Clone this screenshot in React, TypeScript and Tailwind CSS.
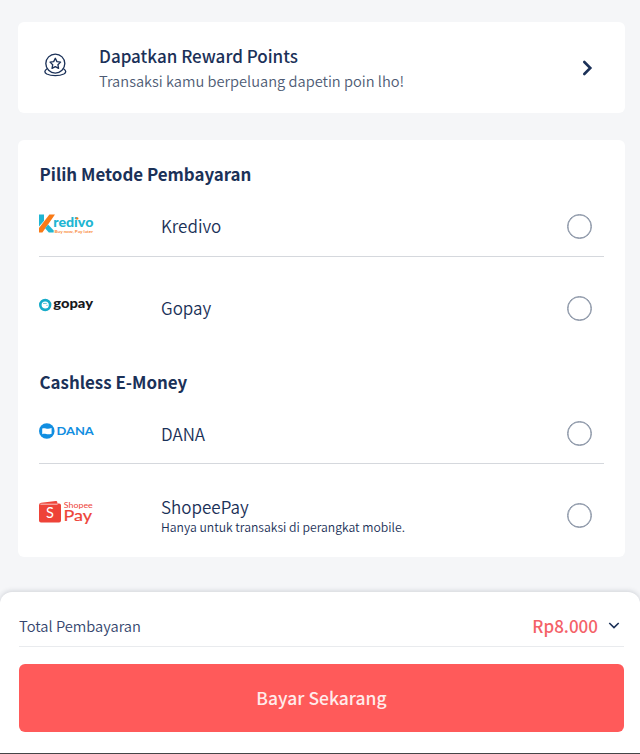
import React from 'react';

function RewardIcon() {
  return (
    <svg width="23" height="24" viewBox="0 0 24 25" fill="none" stroke="#1b3158" strokeWidth="1.4" strokeLinejoin="round" strokeLinecap="round">
      <circle cx="11.8" cy="11" r="9.9" />
      <path d="M3.2 16.4C.2 18.4.2 20.4 2.9 21.9c4.7 2.3 13.1 2.3 17.8 0 2.7-1.5 2.7-3.5-.3-5.5" />
      <path d="m11.8 5.5 1.7 3.5 3.8.5-2.8 2.7.7 3.8-3.4-1.8L8.4 16l.7-3.8-2.8-2.7 3.8-.5z" />
    </svg>
  );
}

function KredivoLogo() {
  return (
    <svg width="56" height="20" viewBox="0 0 56 20">
      <path d="M0 .6h5v6.2L0 12.5z" fill="#20b5d2" />
      <path d="M10.4 .6H16L3.4 18.6H0v-4.5z" fill="#f97a16" />
      <path d="m6.1 14.2 3-3.7 5.6 6.1v2H9.8z" fill="#20b5d2" />
      <text x="14.2" y="13" textLength="40.2" lengthAdjust="spacingAndGlyphs" fontFamily="Lato" fontWeight="900" fontSize="12.4" fill="#20b5d2">redivo</text>
      <circle cx="38.2" cy="4.4" r="1.2" fill="#f97a16" />
      <text x="15.5" y="18.6" textLength="38.5" lengthAdjust="spacingAndGlyphs" fontFamily="Lato" fontWeight="700" fontSize="4.3" fill="#f98a3a">Buy now, Pay later</text>
    </svg>
  );
}

function GopayLogo() {
  return (
    <svg width="56" height="18" viewBox="0 0 56 18">
      <circle cx="6.2" cy="9" r="4.9" fill="#fff" stroke="#16abc9" strokeWidth="2.6" />
      <path d="M4 7.4h3.8M7.4 9.4h1.2" stroke="#16abc9" strokeWidth=".7" />
      <text x="14.2" y="12.2" textLength="39.8" lengthAdjust="spacingAndGlyphs" fontFamily="Lato" fontWeight="900" fontSize="13.4" fill="#17191c">gopay</text>
    </svg>
  );
}

function DanaLogo() {
  return (
    <svg width="56" height="16" viewBox="0 0 56 16">
      <circle cx="7.8" cy="8" r="7.8" fill="#118ee1" />
      <path d="M3.2 5.6c2.9-1.2 4.4 1.1 9.4-.5v5.6c-4.5 1.7-6.4-.8-9.4.5z" fill="#fff" />
      <text x="17.4" y="11.8" textLength="37.4" lengthAdjust="spacingAndGlyphs" fontFamily="Lato" fontWeight="700" fontSize="10.4" fill="#118ee1">DANA</text>
    </svg>
  );
}

function ShopeePayLogo() {
  return (
    <svg width="56" height="26" viewBox="0 0 56 26">
      <path d="M0 5.2Q0 3 2.2 2.8L16.8 1q1.5-.1 1.5 1.3v1.2h1.8q1.9 0 1.9 1.8v15.2q0 1.9-1.9 1.9H2Q0 22.4 0 20.4z" fill="#ee4338" />
      <path d="M1.4 4.2h17.2" stroke="#fff" strokeWidth=".7" />
      <text x="7" y="18.2" fontFamily="Lato" fontSize="14.5" fill="#fff">S</text>
      <text x="24.8" y="7.8" textLength="29" lengthAdjust="spacingAndGlyphs" fontFamily="Lato" fontSize="8.4" fill="#ee4338">Shopee</text>
      <text x="24.4" y="20.8" textLength="28.6" lengthAdjust="spacingAndGlyphs" fontFamily="Lato" fontSize="16" fill="#ee4338" stroke="#ee4338" strokeWidth=".2">Pay</text>
    </svg>
  );
}

function Radio() {
  return <span className="h-[25px] w-[25px] shrink-0 rounded-full border-[1.5px] border-[#8590a2] shadow-[inset_0_0_0_0.5px_#8590a2]" />;
}

type MethodProps = { logo: React.ReactNode; name: string; note?: string; className: string; logoClass: string };

function Method({ logo, name, note, className, logoClass }: MethodProps) {
  return (
    <div className={`flex items-center pr-3 ${className}`}>
      <div className={`w-[122px] shrink-0 ${logoClass}`}>{logo}</div>
      <div className="flex-1">
        <div className="text-[17px] leading-[22px] font-[350]">{name}</div>
        {note && <div className="text-[12.2px] leading-[18px] font-[350] text-[#1b3158]">{note}</div>}
      </div>
      <Radio />
    </div>
  );
}

export default function App() {
  return (
    <div className="flex h-[754px] w-[640px] flex-col overflow-hidden bg-[#f5f6f8] pt-[22px] font-['Noto_Sans_CJK_SC',sans-serif] text-[#1b3158]">
      <section className="ml-[18px] flex h-[91px] w-[607px] shrink-0 items-center rounded-md bg-white">
        <div className="w-[81px] pl-[25.5px] pb-[6px]"><RewardIcon /></div>
        <div className="flex-1">
          <h2 className="text-[17px] leading-[26px] font-medium">Dapatkan Reward Points</h2>
          <p className="text-[14.65px] leading-[24px] font-[350] text-[#4e5b74]">Transaksi kamu berpeluang dapetin poin lho!</p>
        </div>
        <svg className="mr-[31px]" width="12" height="18" viewBox="0 0 12 18" fill="none" stroke="#1b3158" strokeWidth="2.6" strokeLinecap="round"><path d="m2.3 3 6 6-6 6" /></svg>
      </section>

      <section className="mt-[27px] ml-[18px] h-[417px] w-[607px] shrink-0 rounded-md bg-white pr-[21px] pl-[21px]">
        <h2 className="pt-[21px] pl-[0.5px] text-[16.9px] leading-[26px] font-bold">Pilih Metode Pembayaran</h2>
        <Method logo={<KredivoLogo />} name="Kredivo" className="mt-[9px] h-[60px]" logoClass="pb-1" />
        <div className="h-px bg-[#d5d8dd]" />
        <Method logo={<GopayLogo />} name="Gopay" className="h-[102px]" logoClass="pb-1.5" />
        <h2 className="mt-[10px] pl-[0.5px] text-[16.9px] leading-[26px] font-bold">Cashless E-Money</h2>
        <Method logo={<DanaLogo />} name="DANA" className="mt-[9px] h-[59px]" logoClass="pb-1.5" />
        <div className="h-px bg-[#d5d8dd]" />
        <Method logo={<ShopeePayLogo />} name="ShopeePay" note="Hanya untuk transaksi di perangkat mobile." className="h-[103px]" logoClass="pb-1.5" />
      </section>

      <footer className="mt-[35px] flex h-[162px] shrink-0 flex-col rounded-t-xl border-b border-[#444547] bg-white pr-4 pl-[19px] shadow-[0_-1px_5px_rgba(40,50,70,0.18)]">
        <div className="flex h-[55px] w-[605px] items-center border-b border-[#e9ebee] pt-[13px]">
          <span className="flex-1 text-[14.7px] leading-[24px] font-[350] text-[#34466e]">Total Pembayaran</span>
          <span className="text-[17px] leading-[26px] font-medium text-[#f46268]">Rp8.000</span>
          <svg className="mr-[4px] ml-[10px]" width="12" height="10" viewBox="0 0 12 10" fill="none" stroke="#1b3158" strokeWidth="1.6"><path d="m1.3 2 4.7 4.6L10.7 2" /></svg>
        </div>
        <button className="mt-[17px] h-[68px] w-[605px] rounded-md bg-[#ff5a5a] pt-px text-[17.5px] font-medium text-[#ffebea]">Bayar Sekarang</button>
      </footer>
    </div>
  );
}
